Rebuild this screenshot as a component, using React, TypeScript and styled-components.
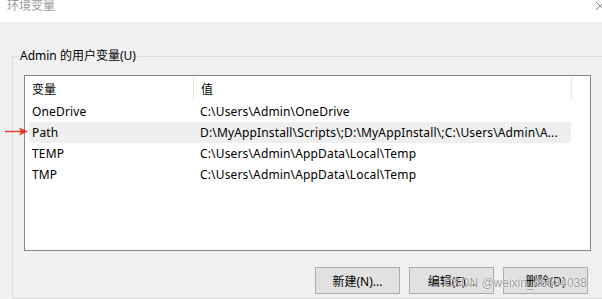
import React from 'react';
import styled, { createGlobalStyle } from 'styled-components';

const GlobalStyle = createGlobalStyle`
  html, body {
    margin: 0;
    padding: 0;
    background: #f0f0f0;
  }
  body {
    font-family: 'Noto Sans', 'Noto Sans CJK SC', sans-serif;
    font-size: 12px;
    color: #000;
  }
`;

const variables = [
  { name: 'OneDrive', value: 'C:\\Users\\Admin\\OneDrive' },
  { name: 'Path', value: 'D:\\MyAppInstall\\Scripts\\;D:\\MyAppInstall\\;C:\\Users\\Admin\\A...', selected: true },
  { name: 'TEMP', value: 'C:\\Users\\Admin\\AppData\\Local\\Temp' },
  { name: 'TMP', value: 'C:\\Users\\Admin\\AppData\\Local\\Temp' },
];

export default function App() {
  return (
    <>
      <GlobalStyle />
      <Window>
        <TitleBar>
          <Title>环境变量</Title>
          <CloseIcon width="10" height="10" viewBox="0 0 10 10">
            <path d="M1 1 L9 9 M9 1 L1 9" stroke="#8a8a8a" strokeWidth="1" fill="none" />
          </CloseIcon>
        </TitleBar>
        <GroupBox>
          <Legend>Admin 的用户变量(U)</Legend>
          <ListBox>
            <HeaderRow>
              <HeaderCell $width={169}>变量</HeaderCell>
              <HeaderCell $width={378}>值</HeaderCell>
            </HeaderRow>
            {variables.map((v) => (
              <Row key={v.name} $selected={!!v.selected}>
                {v.selected && <Arrow />}
                <NameCell>{v.name}</NameCell>
                <ValueCell>{v.value}</ValueCell>
              </Row>
            ))}
          </ListBox>
          <ButtonBar>
            <Button>新建(N)...</Button>
            <Button>编辑(E)...</Button>
            <Button>删除(D)</Button>
          </ButtonBar>
        </GroupBox>
        <Watermark>CSDN @weixin_45534038</Watermark>
      </Window>
    </>
  );
}

const Arrow = () => (
  <ArrowSvg width="23" height="9" viewBox="0 0 23 9">
    <path d="M0 4.5 L16 4.5" stroke="#e8322a" strokeWidth="1.4" />
    <path d="M14 0.5 L23 4.5 L14 8.5 L16 4.5 Z" fill="#e8322a" />
  </ArrowSvg>
);

const Window = styled.div`
  position: relative;
  width: 602px;
  height: 299px;
  overflow: hidden;
  background: #f0f0f0;
  display: flex;
  flex-direction: column;
`;

const TitleBar = styled.div`
  height: 22px;
  background: #fff;
  display: flex;
  justify-content: space-between;
  align-items: flex-start;
  padding-left: 7px;
  overflow: hidden;
  flex-shrink: 0;
`;

const Title = styled.span`
  font-family: 'Noto Sans CJK SC', sans-serif;
  font-size: 12px;
  line-height: 12px;
  color: #9a9a9a;
  margin-top: -1px;
`;

const CloseIcon = styled.svg`
  margin-top: 1px;
  margin-right: -3px;
`;

const GroupBox = styled.fieldset`
  margin: 26px -8px 0 12px;
  padding: 0 0 0 11px;
  border: 1px solid #dcdcdc;
  min-width: 0;
  height: 300px;
`;

const Legend = styled.legend`
  padding: 0 1px;
  margin-left: -5px;
  font-family: 'Noto Sans', 'Noto Sans CJK SC', sans-serif;
  font-size: 12px;
  line-height: 16px;
`;

const ListBox = styled.div`
  margin-top: 11px;
  width: 565px;
  height: 174px;
  border: 1px solid #828790;
  background: #fff;
  display: flex;
  flex-direction: column;
`;

const HeaderRow = styled.div`
  display: flex;
  height: 25px;
`;

const HeaderCell = styled.div<{ $width: number }>`
  width: ${(p) => p.$width}px;
  box-sizing: border-box;
  padding: 1px 0 0 7px;
  border-right: 1px solid #e5e5e5;
  margin: 1px 0 0;
  height: 23px;
  line-height: 22px;
  font-family: 'Noto Sans CJK SC', sans-serif;
`;

const Row = styled.div<{ $selected: boolean }>`
  position: relative;
  display: flex;
  align-items: center;
  height: 21px;
  margin-left: 4px;
  width: 542px;
  letter-spacing: 0.15px;
  background: ${(p) => (p.$selected ? '#efefef' : 'transparent')};
`;

const ArrowSvg = styled.svg`
  position: absolute;
  left: -24px;
  top: 5px;
  overflow: visible;
`;

const NameCell = styled.div`
  width: 171px;
  box-sizing: border-box;
  padding-left: 3px;
`;

const ValueCell = styled.div`
  flex: 1;
  white-space: nowrap;
  overflow: hidden;
  text-overflow: ellipsis;
  padding-right: 4px;
`;

const ButtonBar = styled.div`
  display: flex;
  gap: 9px;
  margin-top: 16px;
  padding-left: 291px;
`;

const Button = styled.button`
  width: 85px;
  height: 27px;
  background: #e1e1e1;
  border: 1px solid #adadad;
  border-radius: 0;
  font-family: 'Noto Sans', 'Noto Sans CJK SC', sans-serif;
  font-size: 12px;
  color: #000;
  padding: 0;
`;

const Watermark = styled.div`
  position: absolute;
  right: 15px;
  bottom: 9px;
  font-family: 'Liberation Sans', sans-serif;
  font-size: 12px;
  color: rgba(140, 140, 140, 0.9);
  text-shadow: 0 0 1px #fff, 0 0 1px #fff;
`;
